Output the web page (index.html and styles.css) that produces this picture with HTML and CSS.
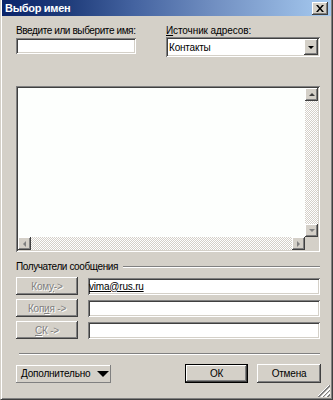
FILE: index.html
```html
<!DOCTYPE html>
<html lang="ru">
<head>
<meta charset="utf-8">
<title>Выбор имен</title>
<link rel="stylesheet" href="styles.css">
</head>
<body>
<div class="win">
  <div class="titlebar">
    <span class="title-text">Выбор имен</span>
    <span class="close"><svg width="8" height="7" viewBox="0 0 8 7"><path d="M0 0h2l2 2.5L6 0h2L5 3.5 8 7H6L4 4.5 2 7H0l3-3.5z" fill="#000"/></svg></span>
  </div>
  <div class="content">
    <div class="top">
      <div class="lbl">Вве<u>д</u>ите или выберите имя:</div>
      <div class="lbl lbl-src"><u>И</u>сточник адресов:</div>
      <div class="field name-field"></div>
      <div class="combo">
        <span class="combo-text">Контакты</span>
        <span class="combo-btn"><i class="tri tri-down dark"></i></span>
      </div>
    </div>

    <div class="list">
      <div class="list-area"></div>
      <div class="vscroll">
        <div class="sbtn"><i class="tri tri-up dark"></i></div>
        <div class="track"></div>
        <div class="sbtn"><i class="tri tri-down"></i></div>
      </div>
      <div class="hscroll">
        <div class="sbtn"><i class="tri tri-left"></i></div>
        <div class="track"></div>
        <div class="sbtn"><i class="tri tri-right"></i></div>
      </div>
      <div class="corner"></div>
    </div>

    <div class="group">
      <span class="group-text">Получатели сообщения</span>
      <span class="etch"></span>
    </div>

    <div class="rows">
      <div class="btn disabled">Ком<u>у</u> -&gt;</div>
      <div class="field rfield"><span class="resolved">vima@rus.ru</span></div>
      <div class="btn disabled">Коп<u>и</u>я -&gt;</div>
      <div class="field rfield"></div>
      <div class="btn disabled"><u>С</u>К -&gt;</div>
      <div class="field rfield"></div>
    </div>

    <div class="sep"></div>

    <div class="footer">
      <div class="btn more">Дополнительно <i class="tri tri-down big"></i></div>
      <div class="spacer"></div>
      <div class="btn default">ОК</div>
      <div class="btn cancel">Отмена</div>
    </div>
  </div>
  <div class="grip"></div>
</div>
</body>
</html>
```

FILE: styles.css
```css
* { box-sizing: border-box; }
html, body { margin: 0; padding: 0; }
body {
  width: 333px;
  height: 400px;
  background: #d4d0c8;
  font-family: "Liberation Sans", Arial, sans-serif;
  font-size: 10px;
  color: #000;
  overflow: hidden;
}
u { text-decoration: underline; }

.win {
  position: relative;
  width: 333px;
  height: 400px;
  background: #d4d0c8;
  border-left: 1px solid #d4d0c8;
  border-right: 1px solid #404040;
  border-bottom: 1px solid #404040;
  box-shadow: inset 1px 0 #fff, inset -1px -1px #808080;
  padding: 0 2px 2px 2px;
}

.titlebar {
  height: 16px;
  margin: 0 -1px;
  background: linear-gradient(90deg, #0a246a 0%, #1f3c7a 20%, #4463a0 40%, #7290c2 65%, #a6caf0 100%);
  display: flex;
  align-items: center;
  justify-content: space-between;
  padding: 0 3px 0 3px;
}
.title-text {
  color: #fff;
  font-weight: bold;
  font-size: 11px;
  letter-spacing: -0.3px;
}
.close {
  width: 16px;
  height: 13px;
  background: #d4d0c8;
  box-shadow: inset -1px -1px #404040, inset 1px 1px #fff, inset -2px -2px #808080;
  display: flex;
  align-items: center;
  justify-content: center;
  margin-top: 1px;
}

.content {
  padding: 8px 0 0 13px;
  width: 317px;
}

.top {
  display: grid;
  grid-template-columns: 120px 154px;
  column-gap: 30px;
  align-items: start;
}
.lbl {
  height: 13px;
  line-height: 13px;
  letter-spacing: -0.4px;
  white-space: nowrap;
}
.lbl-src {
  letter-spacing: -0.1px;
}
.field {
  background: #fff;
  box-shadow: inset 1px 1px #808080, inset -1px -1px #fff, inset 2px 2px #404040, inset -2px -2px #d4d0c8;
}
.name-field {
  height: 16px;
  margin-top: 1px;
}
.combo {
  height: 20px;
  display: flex;
  align-items: center;
  justify-content: space-between;
  background: #fff;
  box-shadow: inset 1px 1px #808080, inset -1px -1px #fff, inset 2px 2px #404040, inset -2px -2px #d4d0c8;
  padding: 2px 2px 2px 3px;
}
.combo-text {
  font-size: 10px;
  letter-spacing: -0.2px;
}
.combo-btn {
  width: 14px;
  height: 16px;
  background: #d4d0c8;
  box-shadow: inset -1px -1px #404040, inset 1px 1px #fff, inset -2px -2px #808080;
  display: flex;
  align-items: center;
  justify-content: center;
}

.tri {
  display: block;
  width: 0;
  height: 0;
  border-style: solid;
  border-color: transparent;
}
.tri-down { border-width: 3px 3.5px 0 3.5px; border-top-color: #808080; }
.tri-up { border-width: 0 3.5px 3px 3.5px; border-bottom-color: #808080; }
.tri-left { border-width: 3.5px 3px 3.5px 0; border-right-color: #808080; }
.tri-right { border-width: 3.5px 0 3.5px 3px; border-left-color: #808080; }
.tri-down.dark { border-top-color: #000; }
.tri-up.dark { border-bottom-color: #404040; }
.tri-down.big { border-width: 6px 6px 0 6px; border-top-color: #000; }

.list {
  margin-top: 29px;
  width: 304px;
  height: 166px;
  padding: 2px;
  box-shadow: inset 1px 1px #808080, inset -1px -1px #fff, inset 2px 2px #404040, inset -2px -2px #d4d0c8;
  display: grid;
  grid-template-columns: 1fr 13px;
  grid-template-rows: 1fr 13px;
  background: #fff;
}
.list-area { background: #fdfffd; }
.vscroll {
  display: flex;
  flex-direction: column;
}
.hscroll {
  display: flex;
}
.track {
  flex: 1;
  background-color: #fff;
  background-image: repeating-conic-gradient(#d4d0c8 0 25%, #fff 0 50%);
  background-size: 2px 2px;
}
.sbtn {
  width: 13px;
  height: 13px;
  flex: none;
  background: #d4d0c8;
  box-shadow: inset -1px -1px #404040, inset 1px 1px #fff, inset -2px -2px #808080;
  display: flex;
  align-items: center;
  justify-content: center;
}
.corner { background: #d4d0c8; }

.group {
  margin-top: 8px;
  height: 13px;
  display: flex;
  align-items: center;
  width: 304px;
}
.group-text {
  letter-spacing: -0.4px;
  padding-right: 5px;
  white-space: nowrap;
}
.etch {
  flex: 1;
  height: 2px;
  border-top: 1px solid #808080;
  border-bottom: 1px solid #fff;
}

.rows {
  margin-top: 4px;
  display: grid;
  grid-template-columns: 62px 232px;
  column-gap: 10px;
  row-gap: 4px;
  align-items: center;
}
.btn {
  height: 18px;
  background: #d4d0c8;
  box-shadow: inset -1px -1px #404040, inset 1px 1px #fff, inset -2px -2px #808080;
  display: flex;
  align-items: center;
  justify-content: center;
  letter-spacing: -0.2px;
  white-space: nowrap;
}
.btn.disabled {
  color: #808080;
  text-shadow: 1px 1px #fff;
}
.rfield {
  height: 17px;
  display: flex;
  align-items: center;
  padding-left: 1px;
}
.resolved {
  text-decoration: underline;
  letter-spacing: -0.2px;
}

.sep {
  margin: 14px 0 0 3px;
  width: 301px;
  height: 2px;
  border-top: 1px solid #808080;
  border-bottom: 1px solid #fff;
}

.footer {
  margin-top: 9px;
  display: flex;
  align-items: center;
  width: 305px;
}
.btn.more {
  width: 95px;
  height: 18px;
  justify-content: flex-start;
  padding-left: 5px;
  gap: 7px;
  box-shadow: inset -1px -1px #808080, inset 1px 1px #fff;
}
.spacer { flex: 1; }
.btn.default {
  width: 63px;
  height: 19px;
  box-shadow: inset 0 0 0 1px #000, inset -2px -2px #404040, inset 2px 2px #fff, inset -3px -3px #808080;
}
.btn.cancel {
  width: 64px;
  height: 19px;
  margin-left: 9px;
}

.grip {
  position: absolute;
  right: 2px;
  bottom: 2px;
  width: 12px;
  height: 12px;
  background: linear-gradient(135deg,
    transparent 0 45%, #fff 45% 50%, #808080 50% 58%, transparent 58% 62%,
    #fff 62% 67%, #808080 67% 75%, transparent 75% 79%,
    #fff 79% 84%, #808080 84% 92%, transparent 92%);
}
```
